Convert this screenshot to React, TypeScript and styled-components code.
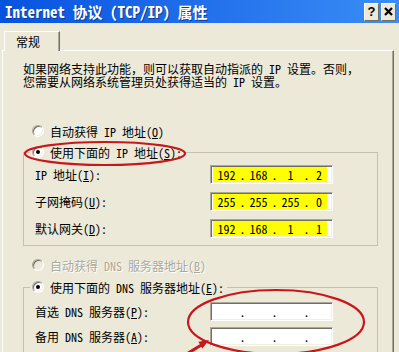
import React from 'react';
import styled, { createGlobalStyle } from 'styled-components';

const FONT = `"Noto Sans Mono CJK SC", "Noto Sans CJK SC", "Liberation Mono", monospace`;

const GlobalStyle = createGlobalStyle`
  html, body { margin: 0; padding: 0; background: #ECE9D8; }
  body { font-family: ${FONT}; font-size: 12px; }
`;

const Window = styled.div`
  position: relative;
  width: 399px;
  height: 352px;
  overflow: hidden;
  background: #ece9d8;
  font-family: ${FONT};
  font-size: 12px;
  color: #000;
  display: flex;
  flex-direction: column;
`;

const TitleBar = styled.div`
  height: 23px;
  flex: none;
  display: flex;
  align-items: center;
  padding: 0 3px 0 5px;
  background: linear-gradient(to right, #0653df 0%, #1a66e8 35%, #3a8df6 100%);
`;

const Title = styled.div`
  flex: 1;
  color: #fff;
  font-weight: bold;
  font-size: 15px;
  line-height: 23px;
  white-space: pre;
  text-shadow: 1px 1px 0 #0a3c9c;
`;

const CaptionButtons = styled.div`
  display: flex;
  gap: 2px;
`;

const CaptionButton = styled.div`
  width: 15px;
  height: 18px;
  box-sizing: border-box;
  background: #ece9d8;
  border: 1px solid;
  border-color: #fff #716f64 #716f64 #fff;
  display: flex;
  align-items: center;
  justify-content: center;
  font-family: "Liberation Sans", sans-serif;
  font-weight: bold;
  font-size: 13px;
  color: #000;
`;

const Body = styled.div`
  flex: 1;
  display: flex;
  flex-direction: column;
  padding-top: 8px;
`;

const TabStrip = styled.div`
  display: flex;
  padding-left: 4px;
  position: relative;
  z-index: 1;
  margin-bottom: -1px;
`;

const Tab = styled.div`
  width: 56px;
  height: 20px;
  box-sizing: border-box;
  border-top: 1px solid #fff;
  border-left: 1px solid #fff;
  border-right: 1px solid #716f64;
  box-shadow: inset -1px 0 0 #aca899;
  background: #ece9d8;
  padding-left: 11px;
  line-height: 19px;
`;

const Panel = styled.div`
  flex: 1;
  margin-left: 2px;
  width: 392px;
  box-sizing: border-box;
  border-left: 1px solid #fff;
  border-top: 1px solid #fff;
  border-right: 1px solid #716f64;
  box-shadow: inset -1px 0 0 #aca899;
  padding: 11px 15px 0 20px;
  display: flex;
  flex-direction: column;
`;

const IntroLine = styled.div`
  height: 13px;
  line-height: 13px;
  white-space: nowrap;
`;

const RadioRow = styled.div<{ $top: number; $disabled?: boolean }>`
  display: flex;
  align-items: center;
  gap: 6px;
  height: 16px;
  padding-left: 9px;
  margin-top: ${(p) => p.$top}px;
  color: ${(p) => (p.$disabled ? '#aca899' : '#000')};
  text-shadow: ${(p) => (p.$disabled ? '1px 1px 0 #fff' : 'none')};
`;

const RadioMark = styled.span<{ $checked?: boolean; $disabled?: boolean }>`
  width: 12px;
  height: 12px;
  box-sizing: border-box;
  border-radius: 50%;
  flex: none;
  border: 1px solid;
  border-color: #aca899 #fff #fff #aca899;
  background: ${(p) => (p.$disabled ? '#ece9d8' : '#fff')};
  box-shadow: inset 1px 1px 0 #716f64, inset -1px -1px 0 #f1efe2;
  display: flex;
  align-items: center;
  justify-content: center;
  &::after {
    content: '';
    width: 4px;
    height: 4px;
    border-radius: 50%;
    background: #000;
    display: ${(p) => (p.$checked ? 'block' : 'none')};
  }
`;

const GroupBox = styled.fieldset<{ $top: number; $padTop: number; $padBottom: number }>`
  margin: ${(p) => p.$top}px 0 0 0;
  min-width: 0;
  border: 1px solid #c4c1b2;
  padding: ${(p) => p.$padTop}px 0 ${(p) => p.$padBottom}px 11px;
`;

const Legend = styled.legend`
  margin-left: -5px;
  padding: 0 3px 0 2px;
  height: 16px;
  display: flex;
  align-items: center;
  gap: 6px;
  white-space: nowrap;
`;

const FieldList = styled.div<{ $gap: number }>`
  display: flex;
  flex-direction: column;
  gap: ${(p) => p.$gap}px;
`;

const FieldRow = styled.div`
  display: grid;
  grid-template-columns: 175px 123px;
  align-items: center;
`;

const FieldLabel = styled.span`
  white-space: nowrap;
  line-height: 16px;
`;

const IpBox = styled.div`
  width: 123px;
  height: 19px;
  box-sizing: border-box;
  border: 1px solid;
  border-color: #aca899 #fff #fff #aca899;
  box-shadow: inset 1px 1px 0 #716f64, inset -1px -1px 0 #f1efe2;
  background: #fff;
  padding: 1px 0 1px 2px;
  display: flex;
`;

const IpFields = styled.div<{ $highlight?: boolean }>`
  width: 114px;
  height: 15px;
  box-sizing: border-box;
  padding-left: 1px;
  background: ${(p) => (p.$highlight ? '#ffff00' : 'transparent')};
  display: grid;
  grid-template-columns: 25px 7px 25px 7px 25px 7px 18px;
  line-height: 15px;
  text-align: center;
`;

const Annotations = styled.svg`
  position: absolute;
  left: 0;
  top: 0;
  pointer-events: none;
`;

function Radio({ checked, disabled }: { checked?: boolean; disabled?: boolean }) {
  return <RadioMark $checked={checked} $disabled={disabled} />;
}

function IpInput({ value, highlight }: { value?: string[]; highlight?: boolean }) {
  const v = value ?? ['', '', '', ''];
  return (
    <IpBox>
      <IpFields $highlight={highlight}>
        <span>{v[0]}</span>
        <span>.</span>
        <span>{v[1]}</span>
        <span>.</span>
        <span>{v[2]}</span>
        <span>.</span>
        <span>{v[3]}</span>
      </IpFields>
    </IpBox>
  );
}

export default function App() {
  return (
    <>
      <GlobalStyle />
      <Window>
        <TitleBar>
          <Title>Internet 协议 (TCP/IP) 属性</Title>
          <CaptionButtons>
            <CaptionButton>?</CaptionButton>
            <CaptionButton>
              <svg width="9" height="9" viewBox="0 0 9 9">
                <path d="M1 1 L8 8 M8 1 L1 8" stroke="#000" strokeWidth="2.2" />
              </svg>
            </CaptionButton>
          </CaptionButtons>
        </TitleBar>
        <Body>
          <TabStrip>
            <Tab>常规</Tab>
          </TabStrip>
          <Panel>
            <IntroLine>如果网络支持此功能，则可以获取自动指派的 IP 设置。否则，</IntroLine>
            <IntroLine>您需要从网络系统管理员处获得适当的 IP 设置。</IntroLine>
            <RadioRow $top={35}>
              <Radio />
              <span>
                自动获得 IP 地址(<u>O</u>)
              </span>
            </RadioRow>
            <GroupBox $top={5} $padTop={5} $padBottom={7}>
              <Legend>
                <Radio checked />
                <span>
                  使用下面的 IP 地址(<u>S</u>):
                </span>
              </Legend>
              <FieldList $gap={8}>
                <FieldRow>
                  <FieldLabel>
                    IP 地址(<u>I</u>):
                  </FieldLabel>
                  <IpInput value={['192', '168', '1', '2']} highlight />
                </FieldRow>
                <FieldRow>
                  <FieldLabel>
                    子网掩码(<u>U</u>):
                  </FieldLabel>
                  <IpInput value={['255', '255', '255', '0']} highlight />
                </FieldRow>
                <FieldRow>
                  <FieldLabel>
                    默认网关(<u>D</u>):
                  </FieldLabel>
                  <IpInput value={['192', '168', '1', '1']} highlight />
                </FieldRow>
              </FieldList>
            </GroupBox>
            <RadioRow $top={11} $disabled>
              <Radio disabled />
              <span>
                自动获得 DNS 服务器地址(<u>B</u>)
              </span>
            </RadioRow>
            <GroupBox $top={6} $padTop={7} $padBottom={20}>
              <Legend>
                <Radio checked />
                <span>
                  使用下面的 DNS 服务器地址(<u>E</u>):
                </span>
              </Legend>
              <FieldList $gap={6}>
                <FieldRow>
                  <FieldLabel>
                    首选 DNS 服务器(<u>P</u>):
                  </FieldLabel>
                  <IpInput />
                </FieldRow>
                <FieldRow>
                  <FieldLabel>
                    备用 DNS 服务器(<u>A</u>):
                  </FieldLabel>
                  <IpInput />
                </FieldRow>
              </FieldList>
            </GroupBox>
          </Panel>
        </Body>
        <Annotations width="399" height="352" viewBox="0 0 399 352">
          <ellipse cx="105" cy="153.5" rx="80" ry="11.5" fill="none" stroke="#c8161d" strokeWidth="2.2" />
          <ellipse cx="276" cy="322" rx="88" ry="32" fill="none" stroke="#c8161d" strokeWidth="2.2" />
          <line x1="180" y1="358" x2="203" y2="344" stroke="#c8161d" strokeWidth="3" />
          <polygon points="209,340 202.4,348.5 198.4,341.7" fill="#c8161d" />
        </Annotations>
      </Window>
    </>
  );
}
